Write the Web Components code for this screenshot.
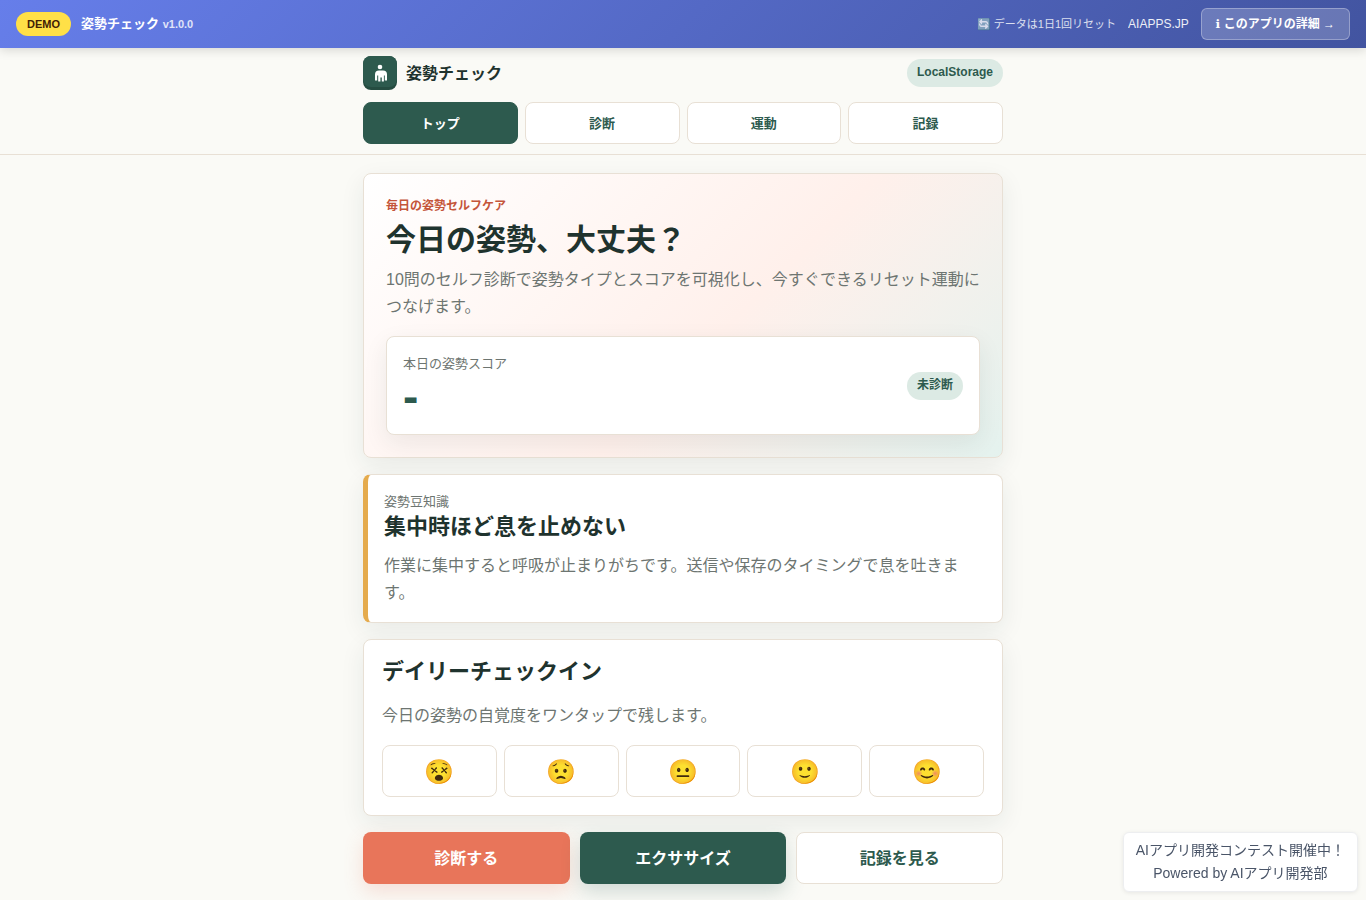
<!DOCTYPE html>
<html lang="ja">
<head>
<meta charset="utf-8">
<meta name="viewport" content="width=device-width, initial-scale=1">
<title>姿勢チェック</title>
<style>
	:root {
		--bg: #fafaf6;
		--ink: #1f332e;
		--muted: #6d7571;
		--green: #2d5a4e;
		--mint: #dceae4;
		--coral: #e8755a;
		--line: #e8e0d5;
		--gold: #e5ab4d;
		--shadow: 0 8px 24px rgba(31, 51, 46, .08);
	}
	body {
		margin: 0;
		background: var(--bg);
		color: var(--ink);
		font: 16px/27px "Liberation Sans", "Noto Sans CJK JP", sans-serif;
	}
	main {
		display: grid;
		gap: 16px;
		max-width: 640px;
		margin: 0 auto;
		padding: 18px 16px 16px;
	}
</style>
</head>
<body>
<demo-bar version="v1.0.0">姿勢チェック</demo-bar>
<app-header current="トップ">姿勢チェック</app-header>
<main>
	<posture-hero></posture-hero>
	<posture-tip>
		<span slot="title">集中時ほど息を止めない</span>
		作業に集中すると呼吸が止まりがちです。送信や保存のタイミングで息を吐きます。
	</posture-tip>
	<daily-checkin></daily-checkin>
	<quick-actions></quick-actions>
</main>
<contest-note></contest-note>

<script>
;(function(customElements) {
	const base = `
		* { box-sizing: border-box; }
		:host { display: block; }
		h1, h2, p { margin: 0; }
		h2 { font-size: 22px; line-height: 28px; }
		a { color: inherit; text-decoration: none; }
		button { font: inherit; cursor: pointer; }
	`
	const card = `
		:host {
			border: 1px solid var(--line);
			border-radius: 8px;
			background: #fff;
			box-shadow: var(--shadow);
			box-sizing: border-box;
		}
	`

	class BaseElement extends HTMLElement {
		constructor() {
			super()
			this.attachShadow({ mode: 'open' })
		}

		connectedCallback() {
			this.shadowRoot.innerHTML = this.render()
		}
	}

	class DemoBar extends BaseElement {
		render() {
			return `
				<style>
					${base}
					:host {
						position: relative;
						z-index: 2;
						display: flex;
						align-items: center;
						justify-content: space-between;
						min-height: 48px;
						padding: 8px 16px;
						box-sizing: border-box;
						background: linear-gradient(135deg, #667eea, #4254a0);
						box-shadow: 0 2px 10px rgba(0, 0, 0, .15);
						color: #fff;
						font-size: 12px;
						line-height: 16px;
					}
					div { display: flex; align-items: center; }
					.left { gap: 10px; }
					.right { gap: 12px; }
					.demo {
						padding: 4px 11px;
						border-radius: 12px;
						background: #ffe047;
						color: #422006;
						font-size: 11px;
						font-weight: bold;
					}
					.name { font-size: 13px; font-weight: bold; }
					small { font-size: 11px; opacity: .8; }
					.reset { opacity: .8; font-size: 11px; }
					.site { opacity: .9; }
					.detail {
						padding: 7px 14px;
						border: 1px solid rgba(255, 255, 255, .3);
						border-radius: 6px;
						background: rgba(255, 255, 255, .2);
						font-weight: bold;
					}
					.info { font-family: "DejaVu Sans", sans-serif; }
				</style>
				<div class="left">
					<span class="demo">DEMO</span>
					<span class="name"><slot></slot> <small>${this.getAttribute('version')}</small></span>
				</div>
				<div class="right">
					<span class="reset">🔄 データは1日1回リセット</span>
					<a class="site" href="#">AIAPPS.JP</a>
					<a class="detail" href="#"><span class="info">ℹ</span> このアプリの詳細 →</a>
				</div>
			`
		}
	}

	class AppHeader extends BaseElement {
		render() {
			const current = this.getAttribute('current')
			const tabs = ['トップ', '診断', '運動', '記録']
			return `
				<style>
					${base}
					:host { border-bottom: 1px solid var(--line); }
					.inner {
						display: grid;
						gap: 12px;
						max-width: 640px;
						margin: 0 auto;
						padding: 8px 16px 10px;
						box-sizing: content-box;
					}
					.row { display: flex; align-items: center; justify-content: space-between; }
					.brand { display: flex; align-items: center; gap: 9px; font-weight: bold; }
					svg { width: 34px; height: 34px; }
					nav { display: grid; grid-template-columns: repeat(4, 1fr); gap: 7px; }
					nav button {
						min-height: 42px;
						padding: 0;
						border: 1px solid var(--line);
						border-radius: 8px;
						background: #fff;
						color: var(--green);
						font-size: 13px;
						font-weight: bold;
					}
					nav button[aria-current] {
						border-color: var(--green);
						background: var(--green);
						color: #fff;
					}
				</style>
				<div class="inner">
					<div class="row">
						<a class="brand" href="#">
							<svg viewBox="0 0 34 34" aria-hidden="true">
								<rect width="34" height="34" rx="8" fill="#254c41"/>
								<path d="M8 0h18a8 8 0 0 1 8 8v15a8 8 0 0 1-8 8H8a8 8 0 0 1-8-8V8a8 8 0 0 1 8-8z" fill="#2d5a4e"/>
								<circle cx="17" cy="11" r="2.3" fill="#fff"/>
								<path d="M16 14.6h4a4 4 0 0 1 4 4v5.900h-2.200v-5h-.9v6h-2.100v-4h-1.400v4h-2.200v-6h-1v5H12v-5.900a4 4 0 0 1 4-4z" fill="#fff"/>
							</svg>
							<slot></slot>
						</a>
						<status-pill>LocalStorage</status-pill>
					</div>
					<nav>
						${tabs.map(tab => `<button type="button"${tab === current ? ' aria-current="page"' : ''}>${tab}</button>`).join('')}
					</nav>
				</div>
			`
		}
	}

	class StatusPill extends BaseElement {
		render() {
			return `
				<style>
					:host {
						display: inline-block;
						padding: 3px 10px 5px;
						border-radius: 14px;
						background: var(--mint);
						color: var(--green);
						font-size: 12px;
						font-weight: bold;
						line-height: 20px;
					}
				</style>
				<slot></slot>
			`
		}
	}

	class PostureHero extends BaseElement {
		render() {
			return `
				<style>
					${base}
					${card}
					:host {
						padding: 22px;
						background: linear-gradient(135deg, #fff 0%, #fff0eb 56%, #e4f2ee 100%);
					}
					.eyebrow { color: #c4553a; font-size: 12px; font-weight: bold; line-height: 20px; }
					h1 { margin: 6px 0 8px; font-size: 30px; line-height: 36px; }
					.lead { color: var(--muted); }
					.score {
						display: flex;
						align-items: center;
						justify-content: space-between;
						margin-top: 16px;
						padding: 16px;
						border: 1px solid var(--line);
						border-radius: 8px;
						background: #fff;
						box-shadow: var(--shadow);
					}
					.label { color: var(--muted); font-size: 13px; line-height: 22px; }
					.value { color: var(--green); font-size: 46px; font-weight: bold; line-height: 43px; }
				</style>
				<p class="eyebrow">毎日の姿勢セルフケア</p>
				<h1>今日の姿勢、大丈夫？</h1>
				<p class="lead">10問のセルフ診断で姿勢タイプとスコアを可視化し、今すぐできるリセット運動につなげます。</p>
				<div class="score">
					<div>
						<p class="label">本日の姿勢スコア</p>
						<p class="value">-</p>
					</div>
					<status-pill>未診断</status-pill>
				</div>
			`
		}
	}

	class PostureTip extends BaseElement {
		render() {
			return `
				<style>
					${base}
					${card}
					:host { padding: 16px; border-left: 5px solid var(--gold); }
					.label { color: var(--muted); font-size: 13px; line-height: 22px; }
					h2 { margin-bottom: 11px; }
					.body { color: var(--muted); }
				</style>
				<p class="label">姿勢豆知識</p>
				<h2><slot name="title"></slot></h2>
				<p class="body"><slot></slot></p>
			`
		}
	}

	class DailyCheckin extends BaseElement {
		render() {
			const moods = [['😵', 'とてもつらい'], ['😟', 'つらい'], ['😐', 'ふつう'], ['🙂', 'よい'], ['😊', 'とてもよい']]
			return `
				<style>
					${base}
					${card}
					:host { padding: 18px; }
					p { margin: 16px 0; color: var(--muted); }
					.moods { display: grid; grid-template-columns: repeat(5, 1fr); gap: 7px; }
					button {
						min-height: 52px;
						padding: 0;
						border: 1px solid var(--line);
						border-radius: 8px;
						background: #fff;
						font-size: 24px;
					}
				</style>
				<h2>デイリーチェックイン</h2>
				<p>今日の姿勢の自覚度をワンタップで残します。</p>
				<div class="moods">
					${moods.map(([face, label]) => `<button type="button" aria-label="${label}">${face}</button>`).join('')}
				</div>
			`
		}
	}

	class QuickActions extends BaseElement {
		render() {
			return `
				<style>
					${base}
					:host { display: grid; grid-template-columns: repeat(3, 1fr); gap: 10px; }
					button {
						min-height: 52px;
						padding: 0;
						border: 1px solid var(--line);
						border-radius: 8px;
						background: #fff;
						color: var(--green);
						font-weight: bold;
					}
					.coral {
						border: 0;
						background: var(--coral);
						color: #fff;
						box-shadow: 0 8px 20px rgba(232, 117, 90, .2);
					}
					.green {
						border: 0;
						background: var(--green);
						color: #fff;
						box-shadow: 0 8px 20px rgba(45, 90, 78, .2);
					}
				</style>
				<button type="button" class="coral">診断する</button>
				<button type="button" class="green">エクササイズ</button>
				<button type="button">記録を見る</button>
			`
		}
	}

	class ContestNote extends BaseElement {
		render() {
			return `
				<style>
					${base}
					:host {
						position: fixed;
						right: 8px;
						bottom: 8px;
						padding: 6px 12px;
						border: 1px solid #edeef0;
						border-radius: 6px;
						background: #fff;
						box-shadow: 0 1px 4px rgba(0, 0, 0, .08);
						color: #4a5568;
						font-size: 14px;
						line-height: 23px;
						text-align: center;
					}
				</style>
				<p>AIアプリ開発コンテスト開催中！</p>
				<p>Powered by <a href="#">AIアプリ開発部</a></p>
			`
		}
	}

	customElements.define('demo-bar', DemoBar)
	customElements.define('status-pill', StatusPill)
	customElements.define('app-header', AppHeader)
	customElements.define('posture-hero', PostureHero)
	customElements.define('posture-tip', PostureTip)
	customElements.define('daily-checkin', DailyCheckin)
	customElements.define('quick-actions', QuickActions)
	customElements.define('contest-note', ContestNote)
})(customElements)
</script>
</body>
</html>
